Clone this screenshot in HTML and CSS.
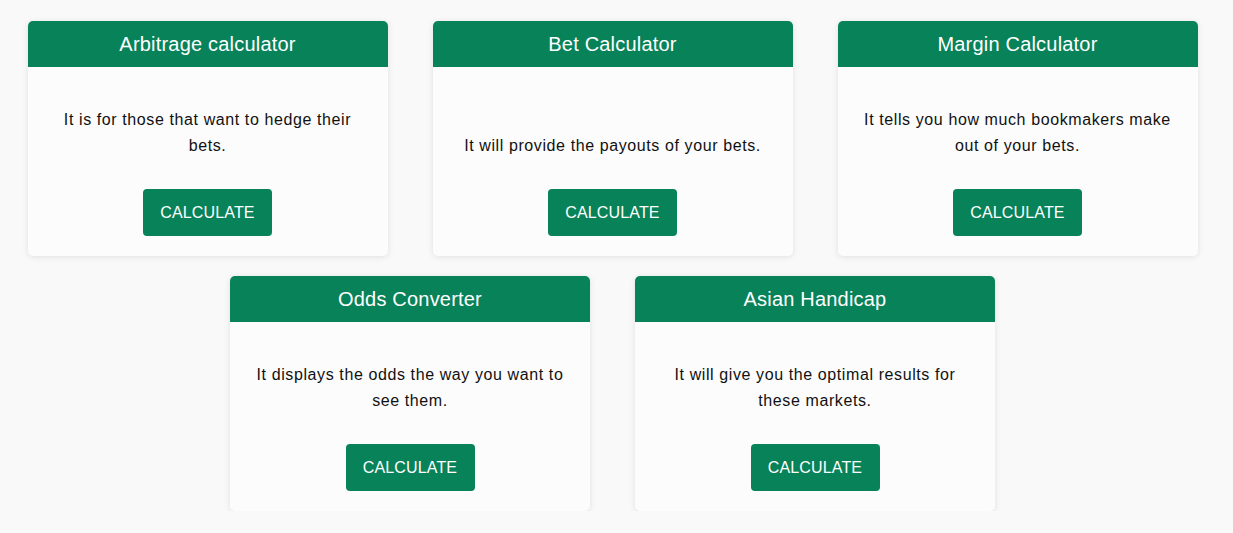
FILE: index.html
```html
<!DOCTYPE html>
<html>
<head>
<meta charset="utf-8">
<link rel="stylesheet" href="styles.css">
</head>
<body>
<div class="cards">
  <div class="card">
    <div class="card-head">Arbitrage calculator</div>
    <div class="card-body">
      <p class="card-text">It is for those that want to hedge their bets.</p>
      <button class="btn">CALCULATE</button>
    </div>
  </div>
  <div class="card">
    <div class="card-head">Bet Calculator</div>
    <div class="card-body">
      <p class="card-text">It will provide the payouts of your bets.</p>
      <button class="btn">CALCULATE</button>
    </div>
  </div>
  <div class="card">
    <div class="card-head">Margin Calculator</div>
    <div class="card-body">
      <p class="card-text">It tells you how much bookmakers make out of your bets.</p>
      <button class="btn">CALCULATE</button>
    </div>
  </div>
  <div class="card">
    <div class="card-head">Odds Converter</div>
    <div class="card-body">
      <p class="card-text">It displays the odds the way you want to see them.</p>
      <button class="btn">CALCULATE</button>
    </div>
  </div>
  <div class="card">
    <div class="card-head">Asian Handicap</div>
    <div class="card-body">
      <p class="card-text">It will give you the optimal results for these markets.</p>
      <button class="btn">CALCULATE</button>
    </div>
  </div>
</div>
</body>
</html>
```

FILE: styles.css
```css
html, body {
  margin: 0;
  padding: 0;
  background: #f9f9f9;
  font-family: "Liberation Sans", Arial, sans-serif;
}

.cards {
  display: flex;
  flex-wrap: wrap;
  justify-content: center;
  column-gap: 45px;
  row-gap: 20px;
  padding: 21px 28px 0 20px;
}

.card {
  width: 360px;
  background: #fcfcfc;
  border-radius: 5px;
  overflow: hidden;
  box-shadow: 0 1px 6px rgba(0, 0, 0, 0.1);
}

.card-head {
  height: 46px;
  background: #088259;
  color: #ffffff;
  font-size: 20px;
  letter-spacing: 0.2px;
  line-height: 46px;
  text-align: center;
}

.card-body {
  display: flex;
  flex-direction: column;
  align-items: center;
  padding: 40px 21px 20px;
}

.card-text {
  margin: 0;
  min-height: 52px;
  display: flex;
  align-items: flex-end;
  justify-content: center;
  text-align: center;
  font-size: 16px;
  line-height: 26px;
  letter-spacing: 0.6px;
  color: #111111;
}

.btn {
  margin-top: 30px;
  width: 129px;
  height: 47px;
  border: none;
  border-radius: 4px;
  background: #088259;
  color: #ffffff;
  font-family: "Liberation Sans", Arial, sans-serif;
  font-size: 16px;
  letter-spacing: 0.15px;
  padding: 0;
  cursor: pointer;
}
```
